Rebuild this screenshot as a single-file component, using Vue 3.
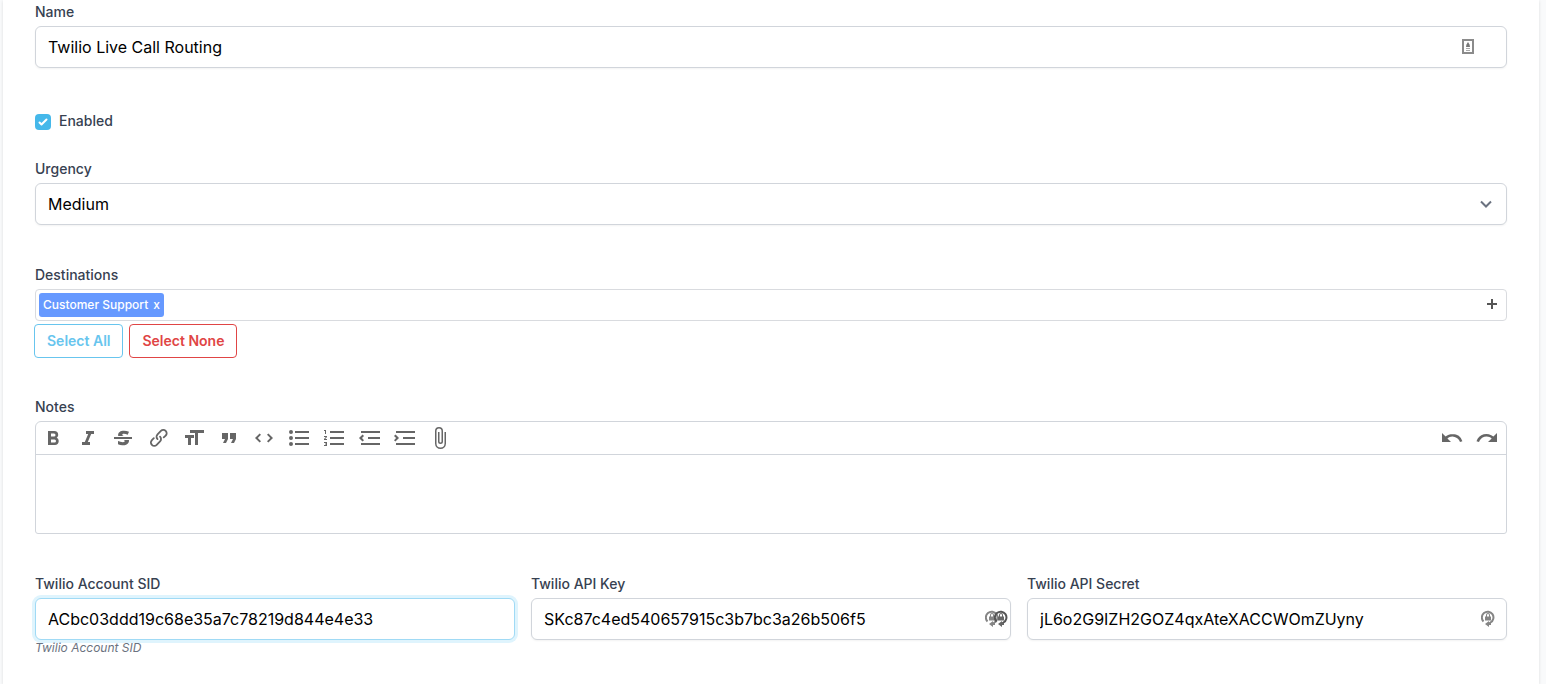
<script setup>
import { ref } from 'vue'

const name = ref('Twilio Live Call Routing')
const enabled = ref(true)
const urgency = ref('Medium')
const notes = ref('')
const sid = ref('ACbc03ddd19c68e35a7c78219d844e4e33')
const apiKey = ref('SKc87c4ed540657915c3b7bc3a26b506f5')
const apiSecret = ref('jL6o2G9IZH2GOZ4qxAteXACCWOmZUyny')

const tools = [
  { label: 'Bold', d: 'M15.6 11.8c1-.7 1.6-1.8 1.6-2.8a4 4 0 0 0-4-4H7v14h7c2.1 0 3.7-1.7 3.7-3.8 0-1.5-.8-2.8-2.1-3.4zM10 7.5h3a1.5 1.5 0 1 1 0 3h-3v-3zm3.5 9H10v-3h3.5a1.5 1.5 0 1 1 0 3z' },
  { label: 'Italic', d: 'M10 5v3h2.2l-3.4 8H6v3h8v-3h-2.2l3.4-8H18V5h-8z' },
  { label: 'Strikethrough', d: 'M12.73 14l.28.14c.26.15.45.3.57.44.12.14.18.3.18.5 0 .3-.15.56-.44.75-.3.2-.76.3-1.39.3A13.52 13.52 0 0 1 7 14.95v3.37a10.64 10.64 0 0 0 4.84.88c1.26 0 2.35-.19 3.28-.56.93-.37 1.64-.9 2.14-1.57s.74-1.45.74-2.32c0-.26-.02-.51-.06-.75h-5.21zm-5.5-4c-.08-.34-.12-.7-.12-1.1 0-1.29.52-2.3 1.58-3.02 1.05-.72 2.5-1.08 4.34-1.08 1.62 0 3.28.34 4.97 1l-1.3 2.93c-1.47-.6-2.73-.9-3.8-.9-.55 0-.96.08-1.2.26-.26.17-.38.38-.38.64 0 .27.16.52.48.74.17.12.53.3 1.05.53H7.23zM3 13h18v-2H3v2z' },
  { label: 'Link', d: 'M9.88 13.7a4.3 4.3 0 0 1 0-6.07l3.37-3.37a4.26 4.26 0 0 1 6.07 0 4.3 4.3 0 0 1 0 6.06l-1.96 1.72a.91.91 0 1 1-1.3-1.3l1.97-1.71a2.46 2.46 0 0 0-3.48-3.48l-3.38 3.37a2.46 2.46 0 0 0 0 3.48.91.91 0 1 1-1.29 1.3zM4.25 19.46a4.3 4.3 0 0 1 0-6.07l1.93-1.9a.91.91 0 1 1 1.3 1.3l-1.93 1.9a2.46 2.46 0 0 0 3.48 3.48l3.37-3.38c.96-.96.96-2.52 0-3.48a.91.91 0 1 1 1.3-1.29 4.3 4.3 0 0 1 0 6.07l-3.38 3.38a4.26 4.26 0 0 1-6.07 0z' },
  { label: 'Heading', d: 'M12 9v3H9v7H6v-7H3V9h9zM8 4h14v3h-6v12h-3V7H8V4z' },
  { label: 'Quote', d: 'M6 17h3l2-4V7H5v6h3zm8 0h3l2-4V7h-6v6h3z' },
  { label: 'Code', d: 'M18.2 12L15 15.2l1.4 1.4L21 12l-4.6-4.6L15 8.8l3.2 3.2zM5.8 12L9 8.8 7.6 7.4 3 12l4.6 4.6L9 15.2 5.8 12z' },
  { label: 'Bullets', d: 'M4 4a2 2 0 1 0 0 4 2 2 0 0 0 0-4zm0 6a2 2 0 1 0 0 4 2 2 0 0 0 0-4zm0 6a2 2 0 1 0 0 4 2 2 0 0 0 0-4zm4 3h14v-2H8v2zm0-6h14v-2H8v2zm0-8v2h14V5H8z' },
  { label: 'Numbers', d: 'M2 17h2v.5H3v1h1v.5H2v1h3v-4H2v1zm1-9h1V4H2v1h1v3zm-1 3h1.8L2 13.1v.9h3v-1H3.2L5 10.9V10H2v1zm6-6v2h14V5H8zm0 14h14v-2H8v2zm0-6h14v-2H8v2z' },
  { label: 'Decrease level', d: 'M3 19h19v-2H3v2zm7-6h12v-2H10v2zm-8.3-.3l2.8 2.9L6 14.2 4 12l2-2-1.4-1.5L1 12l.7.7zM3 5v2h19V5H3z' },
  { label: 'Increase level', d: 'M3 19h19v-2H3v2zm7-6h12v-2H10v2zm-6.9-1L1 14.2l1.4 1.4L6 12l-.7-.7-2.8-2.8L1 9.9 3.1 12zM3 5v2h19V5H3z' },
  { label: 'Attach files', d: 'M16.5 6v11.5a4 4 0 1 1-8 0V5a2.5 2.5 0 0 1 5 0v10.5a1 1 0 1 1-2 0V6H10v9.5a2.5 2.5 0 0 0 5 0V5a4 4 0 1 0-8 0v12.5a5.5 5.5 0 0 0 11 0V6h-1.5z' },
]
const history = [
  { label: 'Undo', d: 'M12.5 8c-2.6 0-5 1-6.9 2.6L2 7v9h9l-3.6-3.6A8 8 0 0 1 20 16l2.4-.8a10.5 10.5 0 0 0-10-7.2z' },
  { label: 'Redo', d: 'M18.4 10.6a10.5 10.5 0 0 0-16.9 4.6L4 16a8 8 0 0 1 12.7-3.6L13 16h9V7l-3.6 3.6z' },
]
</script>

<template>
  <main class="page">
    <form class="card" @submit.prevent>
      <div class="field">
        <label for="name">Name</label>
        <div class="control">
          <input id="name" v-model="name" type="text" class="input" />
          <svg class="contact" viewBox="0 0 12 15" aria-hidden="true">
            <rect x="1" y="1" width="10" height="13" fill="#fff" stroke="#8b8b8b" stroke-width="2" />
            <path d="M6 3l1.5 2.5L8 8H4l.5-2.5z" fill="#777" />
            <path d="M4 9h4v1H4zM4 11h4v1H4z" fill="#aaa" />
          </svg>
        </div>
      </div>

      <div class="check">
        <input id="enabled" v-model="enabled" type="checkbox" />
        <svg viewBox="0 0 16 16" aria-hidden="true"><path d="M12.207 4.793a1 1 0 0 1 0 1.414l-5 5a1 1 0 0 1-1.414 0l-2-2a1 1 0 0 1 1.414-1.414L6.5 9.086l4.293-4.293a1 1 0 0 1 1.414 0z" /></svg>
        <label for="enabled">Enabled</label>
      </div>

      <div class="field">
        <label for="urgency">Urgency</label>
        <div class="control">
          <select id="urgency" v-model="urgency" class="input">
            <option>Medium</option>
          </select>
          <svg class="chevron" viewBox="0 0 20 20" aria-hidden="true"><path d="M5 7.5l5 5 5-5" /></svg>
        </div>
      </div>

      <div class="field destinations" role="group" aria-labelledby="dest-label">
        <span id="dest-label" class="label">Destinations</span>
        <div class="tags">
          <span class="tag">Customer Support <button type="button" aria-label="Remove Customer Support">x</button></span>
          <button type="button" class="add" aria-label="Add destination">
            <svg viewBox="0 0 10 10"><path d="M4 0h2v4h4v2H6v4H4V6H0V4h4z" /></svg>
          </button>
        </div>
        <div class="actions">
          <button type="button" class="all">Select All</button>
          <button type="button" class="none">Select None</button>
        </div>
      </div>

      <div class="field">
        <label for="notes">Notes</label>
        <div class="editor">
          <div class="toolbar">
            <div class="tools">
              <button v-for="t in tools" :key="t.label" type="button" :aria-label="t.label">
                <svg viewBox="0 0 24 24"><path :d="t.d" /></svg>
              </button>
            </div>
            <div class="history">
              <button v-for="t in history" :key="t.label" type="button" :aria-label="t.label">
                <svg viewBox="0 0 24 24"><path :d="t.d" /></svg>
              </button>
            </div>
          </div>
          <textarea id="notes" v-model="notes"></textarea>
        </div>
      </div>

      <div class="columns">
        <div class="field">
          <label for="sid">Twilio Account SID</label>
          <input id="sid" v-model="sid" type="text" class="input active" aria-describedby="sid-help" />
          <em id="sid-help" class="help">Twilio Account SID</em>
        </div>
        <div class="field">
          <label for="key">Twilio API Key</label>
          <div class="control">
            <input id="key" v-model="apiKey" type="text" class="input" />
            <span class="locks">
              <svg v-for="n in 2" :key="n" class="lock" :class="{ dark: n === 2 }" viewBox="0 0 14 17" aria-hidden="true">
                <path class="ring" d="M2.5 11.5A5.8 5.8 0 1 1 9.5 12.5L7.5 13.8" />
                <path d="M4 6.500h1V5a2 2 0 0 1 4 0v1.500h1V10.500H4zM6 6.500h2V5a1 1 0 0 0-2 0zM4 14l4-3v2h2v2H8v2z" />
              </svg>
            </span>
          </div>
        </div>
        <div class="field">
          <label for="secret">Twilio API Secret</label>
          <div class="control">
            <input id="secret" v-model="apiSecret" type="text" class="input" />
            <span class="locks single">
              <svg class="lock" viewBox="0 0 14 17" aria-hidden="true">
                <path class="ring" d="M2.5 11.5A5.8 5.8 0 1 1 9.5 12.5L7.5 13.8" />
                <path d="M4 6.500h1V5a2 2 0 0 1 4 0v1.500h1V10.500H4zM6 6.500h2V5a1 1 0 0 0-2 0zM4 14l4-3v2h2v2H8v2z" />
              </svg>
            </span>
          </div>
        </div>
      </div>
    </form>
  </main>
</template>

<style>
body {
  background: #f9fafb;
}
</style>

<style scoped>
* {
  box-sizing: border-box;
}
.page {
  min-height: 100vh;
  padding: 0 7px 0 3px;
  display: flex;
  font-family: Inter, "Liberation Sans", sans-serif;
  color: #374151;
}
.card {
  flex: 1;
  min-width: 0;
  padding: 2px 32px 28px;
  background: #fff;
  box-shadow: 0 1px 3px rgba(0, 0, 0, 0.12);
}
button,
input,
select,
textarea {
  font: inherit;
  color: inherit;
  margin: 0;
}
button {
  padding: 0;
  border: 0;
  background: none;
}
svg {
  display: block;
}
.field {
  display: flex;
  flex-direction: column;
  margin-bottom: 40px;
}
label,
.label {
  font-size: 14px;
  font-weight: 500;
  line-height: 20px;
}
.field > label,
.field > .label {
  margin-bottom: 4px;
}
.control {
  position: relative;
}
.input {
  display: block;
  width: 100%;
  height: 42px;
  padding: 8px 12px;
  border: 1px solid #d1d5db;
  border-radius: 6px;
  background: #fff;
  box-shadow: 0 1px 2px rgba(0, 0, 0, 0.05);
  font-size: 16px;
  line-height: 24px;
  color: #000;
  appearance: none;
  outline: none;
}
.input.active {
  border-color: #a0daf5;
  box-shadow: 0 0 0 3px #dff4fd;
}
.contact {
  position: absolute;
  right: 33px;
  top: 13px;
  width: 12px;
  height: 15px;
}
.chevron {
  position: absolute;
  right: 11px;
  top: 11px;
  width: 20px;
  height: 20px;
  fill: none;
  stroke: #6b7280;
  stroke-width: 2;
  pointer-events: none;
}
.check {
  position: relative;
  display: flex;
  align-items: flex-start;
  margin: 43px 0 28px;
  gap: 8px;
}
.check input {
  width: 16px;
  height: 16px;
  margin-top: 3px;
  border-radius: 4px;
  background: #45b8ea;
  appearance: none;
}
.check svg {
  position: absolute;
  left: 0;
  top: 3px;
  width: 16px;
  height: 16px;
  fill: #fff;
  pointer-events: none;
}
.destinations {
  margin-bottom: 39px;
}
.tags {
  display: flex;
  align-items: center;
  justify-content: space-between;
  height: 32px;
  padding: 0 9px 0 3px;
  border: 1px solid #d9dbdf;
  border-radius: 4px;
}
.tag {
  display: flex;
  gap: 5px;
  padding: 0 4px;
  border-radius: 3px;
  background: #6699ff;
  color: #fff;
  font-size: 12px;
  font-weight: 500;
  line-height: 24px;
}
.add {
  padding-bottom: 2px;
}
.add svg {
  width: 10px;
  height: 10px;
  fill: #555;
}
.actions {
  display: flex;
  gap: 6px;
  margin: 3px 0 0 -1px;
}
.actions button {
  height: 34px;
  padding: 0 12px;
  border: 1px solid;
  border-radius: 4px;
  font-size: 14px;
  font-weight: 600;
  line-height: 20px;
}
.all {
  color: #68c5ee;
}
.none {
  color: #e04545;
}
.editor {
  border: 1px solid #d1d5db;
  border-radius: 6px 6px 3px 3px;
}
.toolbar {
  display: flex;
  justify-content: space-between;
  padding-right: 1px;
  border-bottom: 1px solid #d1d5db;
}
.tools {
  display: grid;
  grid-template-columns: repeat(12, 1fr);
  width: 422px;
}
.history {
  display: grid;
  grid-template-columns: 35px 35px;
}
.toolbar button {
  display: flex;
  align-items: center;
  padding-left: 5px;
  height: 32px;
}
.toolbar svg {
  width: 24px;
  height: 24px;
  fill: #666;
}
.editor textarea {
  display: block;
  width: 100%;
  height: 78px;
  padding: 8px 12px;
  border: 0;
  background: none;
  resize: none;
  outline: none;
}
.columns {
  display: grid;
  grid-template-columns: repeat(3, minmax(0, 1fr));
  gap: 16px;
}
.columns .field {
  margin-bottom: 0;
}
.help {
  font-size: 12px;
  line-height: 16px;
  color: #6b7280;
}
.locks {
  position: absolute;
  right: 3px;
  top: 12px;
  display: flex;
}
.locks.single {
  right: 12px;
}
.lock {
  width: 14px;
  height: 17px;
  fill: #858585;
}
.lock .ring {
  fill: none;
  stroke: #858585;
  stroke-width: 2;
}
.lock.dark {
  margin-left: -5px;
  fill: #666;
}
.lock.dark .ring {
  stroke: #555;
}
</style>
